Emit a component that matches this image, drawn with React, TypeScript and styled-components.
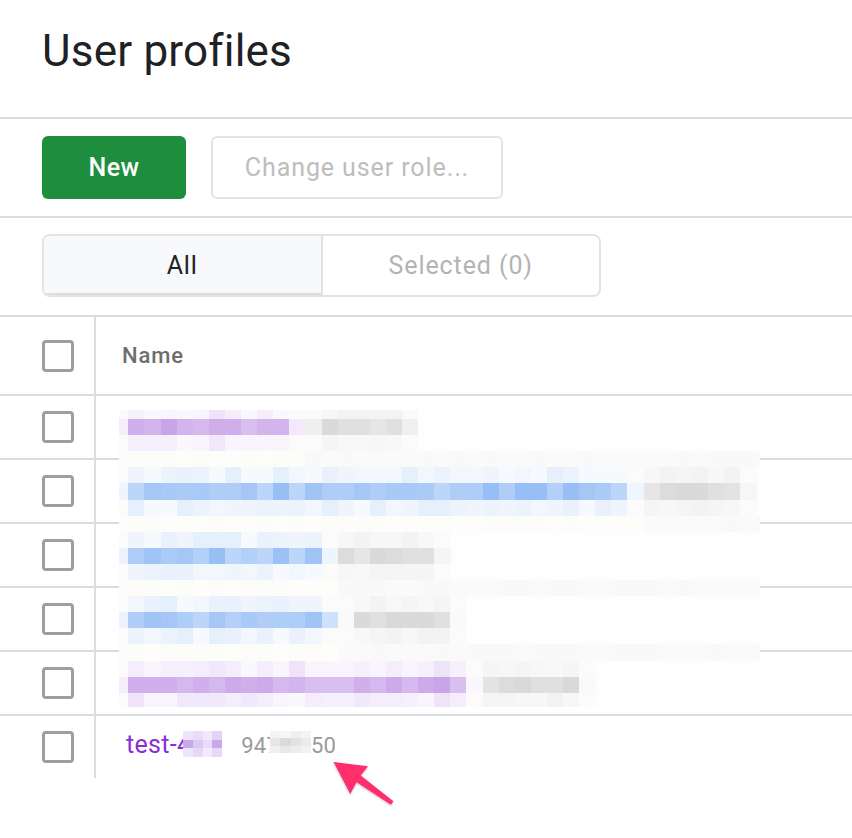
import React from 'react';
import styled, { createGlobalStyle } from 'styled-components';

const GlobalStyle = createGlobalStyle`
  html, body { margin: 0; padding: 0; background: #ffffff; }
  body { font-family: Roboto, "Noto Sans", Arial, sans-serif; }
  * { box-sizing: border-box; }
`;

const Page = styled.div`
  position: relative;
  width: 852px;
  min-height: 838px;
  background: #fff;
`;

const Header = styled.header`
  height: 117px;
  padding: 25px 0 0 42px;
`;

const Title = styled.h1`
  margin: 0;
  font-family: Roboto, sans-serif;
  font-size: 44px;
  line-height: 52px;
  font-weight: 400;
  letter-spacing: 0.2px;
  color: #202124;
`;

const Rule = styled.div`
  height: 2px;
  background: #dadce0;
`;

const Toolbar = styled.div`
  height: 97px;
  display: flex;
  align-items: center;
  gap: 25px;
  padding: 0 42px;
`;

const PrimaryButton = styled.button`
  width: 144px;
  height: 63px;
  padding: 0;
  border: 0;
  border-radius: 6px;
  background: #1e8e3e;
  color: #ffffff;
  font-family: Roboto, sans-serif;
  font-size: 25px;
  font-weight: 500;
  letter-spacing: 0.4px;
`;

const OutlineButton = styled.button`
  width: 292px;
  height: 63px;
  padding: 0;
  border: 2px solid #e3e3e3;
  border-radius: 6px;
  background: #ffffff;
  color: #bdbdbd;
  font-family: Roboto, sans-serif;
  font-size: 25px;
  font-weight: 400;
  letter-spacing: 0.9px;
`;

const TabBar = styled.div`
  height: 97px;
  padding: 16px 42px 0;
`;

const TabGroup = styled.div`
  display: flex;
  width: 559px;
  height: 63px;
  border: 2px solid #e3e3e3;
  border-radius: 8px;
  overflow: hidden;
`;

const Tab = styled.div<{ $active?: boolean; $divider?: boolean }>`
  flex: 1;
  display: flex;
  align-items: center;
  justify-content: center;
  font-size: 25px;
  letter-spacing: 0.9px;
  color: ${(p) => (p.$active ? '#202124' : '#b3b3b3')};
  background: ${(p) => (p.$active ? '#f8f9fa' : '#ffffff')};
  border-right: ${(p) => (p.$divider ? '2px solid #e3e3e3' : '0')};
  box-shadow: ${(p) => (p.$active ? 'inset 0 -2px 0 #dcdde0' : 'none')};
`;

const Table = styled.div`
  position: relative;
  border-top: 2px solid #dadce0;
`;

const Row = styled.div<{ $h: number; $last?: boolean }>`
  display: flex;
  height: ${(p) => p.$h + (p.$last ? 0 : 2)}px;
  border-bottom: ${(p) => (p.$last ? '0' : '2px solid #dadce0')};
`;

const CheckCell = styled.div`
  width: 96px;
  flex: none;
  display: flex;
  align-items: center;
  padding-left: 42px;
  border-right: 2px solid #dadce0;
`;

const Checkbox = styled.div`
  width: 32px;
  height: 32px;
  border: 3px solid #9e9e9e;
  border-radius: 4px;
`;

const MainCell = styled.div<{ $pb?: number }>`
  flex: 1;
  display: flex;
  align-items: center;
  padding-left: 26px;
  padding-bottom: ${(p) => p.$pb ?? 0}px;
`;

const HeaderLabel = styled.span`
  font-size: 22px;
  font-weight: 500;
  letter-spacing: 0.9px;
  color: #6e6e6e;
`;

const Line = styled.span`
  white-space: nowrap;
  padding-left: 4px;
`;

const NameLink = styled.span`
  font-size: 25px;
  letter-spacing: 0.3px;
  color: #8a2fd6;
`;

const Phone = styled.span`
  margin-left: 19px;
  font-size: 22px;
  letter-spacing: 0.2px;
  color: #9a9a9a;
`;

const Cover = styled.svg<{ $ml: number; $va: number }>`
  display: inline-block;
  margin-left: ${(p) => p.$ml}px;
  vertical-align: ${(p) => p.$va}px;
`;

const Overlay = styled.svg`
  position: absolute;
  left: 119px;
  top: 93px;
`;

const Arrow = styled.svg`
  position: absolute;
  left: 326px;
  top: 754px;
  overflow: visible;
`;

/* ---------- pixelation mosaic (redacted drawing) ---------- */
const X0 = 112.2;
const Y0 = 402.9;
const S = 16.1;

const rnd = (a: number, b: number) => {
  const x = Math.sin(a * 127.1 + b * 311.7) * 43758.5453;
  return x - Math.floor(x);
};
const pick = (arr: string[], a: number, b: number) => arr[Math.floor(rnd(a, b) * arr.length)];

const STRONG: Record<string, string[]> = {
  purple: ['#d0b0ec', '#d6baef', '#c8a4e8', '#d3b5ed', '#cdabea', '#d9bff0', '#cfaeeb', '#d5b8ee'],
  blue: ['#9bc1f6', '#a8caf7', '#aecdf7', '#b2d0f8', '#97bef5', '#bcd6f9', '#abcbf7', '#a1c4f6', '#a6c7f6', '#afcdf7'],
  gray: ['#d9d9d9', '#dcdcdc', '#e0e0e0', '#e6e6e6', '#dadada', '#e3e3e3'],
};
const FAINT: Record<string, string[]> = {
  purple: ['#fbf7fe', '#f5edfb', '#f2e8fb', '#f9f4fd', '#f6effc', '#efe3f9'],
  blue: ['#edf3fd', '#f2f6fd', '#eaf1fc', '#f6f9fe', '#f0f5fd', '#e6effc'],
  gray: ['#f5f5f5', '#f7f7f7', '#f3f3f3', '#f8f8f8'],
};

type Seg = { from: number; to: number; kind: 'purple' | 'blue' | 'gray' | 'solid'; color?: string };
const LINES: { tone: 'purple' | 'blue'; segs: Seg[] }[] = [
  {
    tone: 'purple',
    segs: [
      { from: 0, to: 0, kind: 'solid', color: '#f6ecfb' },
      { from: 1, to: 10, kind: 'purple' },
      { from: 11, to: 11, kind: 'solid', color: '#f5e8fa' },
      { from: 12, to: 12, kind: 'solid', color: '#eef0ee' },
      { from: 13, to: 17, kind: 'gray' },
      { from: 18, to: 18, kind: 'solid', color: '#f0f0f0' },
    ],
  },
  {
    tone: 'blue',
    segs: [
      { from: 0, to: 0, kind: 'solid', color: '#eef5fe' },
      { from: 1, to: 31, kind: 'blue' },
      { from: 32, to: 32, kind: 'solid', color: '#f0f6fe' },
      { from: 33, to: 38, kind: 'gray' },
      { from: 39, to: 39, kind: 'solid', color: '#f6f6f6' },
    ],
  },
  {
    tone: 'blue',
    segs: [
      { from: 0, to: 0, kind: 'solid', color: '#eaf2fd' },
      { from: 1, to: 12, kind: 'blue' },
      { from: 13, to: 13, kind: 'solid', color: '#eef5fe' },
      { from: 14, to: 19, kind: 'gray' },
      { from: 20, to: 20, kind: 'solid', color: '#f5f5f5' },
    ],
  },
  {
    tone: 'blue',
    segs: [
      { from: 0, to: 0, kind: 'solid', color: '#eaf2fd' },
      { from: 1, to: 12, kind: 'blue' },
      { from: 13, to: 13, kind: 'solid', color: '#cfe2fb' },
      { from: 14, to: 14, kind: 'solid', color: '#fafafa' },
      { from: 15, to: 20, kind: 'gray' },
      { from: 21, to: 21, kind: 'solid', color: '#fafafa' },
    ],
  },
  {
    tone: 'purple',
    segs: [
      { from: 0, to: 0, kind: 'solid', color: '#f6ecfb' },
      { from: 1, to: 21, kind: 'purple' },
      { from: 22, to: 22, kind: 'solid', color: '#faf6fd' },
      { from: 23, to: 28, kind: 'gray' },
      { from: 29, to: 29, kind: 'solid', color: '#fafafa' },
    ],
  },
];

type Cell = { x: number; y: number; c: string };

const buildCells = (): Cell[] => {
  const cells: Cell[] = [];
  LINES.forEach((line, i) => {
    const kTop = 4 * i;
    const rows = [kTop, kTop + 1, kTop + 2];
    rows.forEach((k, ri) => {
      line.segs.forEach((seg) => {
        for (let c = seg.from; c <= seg.to; c++) {
          let color: string;
          if (ri === 1) {
            color = seg.kind === 'solid' ? (seg.color as string) : pick(STRONG[seg.kind], k, c);
          } else if (seg.kind === 'solid') {
            color = '#fbfbfb';
          } else {
            color = pick(FAINT[seg.kind], k, c);
          }
          cells.push({ x: X0 + c * S, y: Y0 + k * S, c: color });
        }
      });
    });
    if (i < LINES.length - 1) {
      const k = kTop + 3;
      const toneEnd = line.segs.find((s) => s.kind === line.tone)!.to;
      for (let c = 0; c <= 40; c++) {
        const color = c <= toneEnd + 1 ? (rnd(k, c) > 0.5 ? '#fcfcf8' : '#fdfdfa') : rnd(k, c) > 0.5 ? '#f9f9f9' : '#fafafa';
        cells.push({ x: X0 + c * S, y: Y0 + k * S, c: color });
      }
    }
  });
  return cells;
};

const CELLS = buildCells();

const Mosaic = () => (
  <Overlay width={641} height={297} viewBox="119 410 641 297" shapeRendering="crispEdges">
    <rect x={119} y={410} width={641} height={297} fill="#fefefe" />
    {CELLS.map((cell, idx) => (
      <rect key={idx} x={cell.x} y={cell.y} width={S + 0.3} height={S + 0.3} fill={cell.c} />
    ))}
  </Overlay>
);

const SmallMosaic = ({ grid, w, h, ml, va }: { grid: string[][]; w: number; h: number; ml: number; va: number }) => {
  const rows = grid.length;
  const cols = grid[0].length;
  const cw = w / cols;
  const ch = h / rows;
  return (
    <Cover width={w} height={h} $ml={ml} $va={va} shapeRendering="crispEdges">
      {grid.map((r, ri) =>
        r.map((c, ci) => <rect key={`${ri}-${ci}`} x={ci * cw} y={ri * ch} width={cw + 0.5} height={ch + 0.5} fill={c} />)
      )}
    </Cover>
  );
};

const NAME_GRID = [
  ['#eee3fa', '#e9dcf7', '#f1e8fb', '#e4d3f6'],
  ['#c9a8ea', '#dcc9f3', '#e9dcf8', '#c9a9ec'],
  ['#efe5fa', '#e6d8f7', '#f3ebfc', '#e8daf7'],
];
const NUM_GRID = [
  ['#f3f3f3', '#f6f6f6', '#efefef', '#f4f4f4'],
  ['#e6e6e6', '#dadada', '#e2e2e2', '#ebebeb'],
  ['#f0f0f0', '#e8e8e8', '#ededed', '#f2f2f2'],
];

const BODY_ROWS = 5;

export default function App() {
  return (
    <Page>
      <GlobalStyle />
      <Header>
        <Title>User profiles</Title>
      </Header>
      <Rule />
      <Toolbar>
        <PrimaryButton>New</PrimaryButton>
        <OutlineButton>Change user role...</OutlineButton>
      </Toolbar>
      <Rule />
      <TabBar>
        <TabGroup>
          <Tab $active $divider>All</Tab>
          <Tab>Selected (0)</Tab>
        </TabGroup>
      </TabBar>
      <Table>
        <Row $h={77}>
          <CheckCell>
            <Checkbox />
          </CheckCell>
          <MainCell>
            <HeaderLabel>Name</HeaderLabel>
          </MainCell>
        </Row>
        {Array.from({ length: BODY_ROWS }).map((_, i) => (
          <Row key={i} $h={62}>
            <CheckCell>
              <Checkbox />
            </CheckCell>
            <MainCell />
          </Row>
        ))}
        <Row $h={62} $last>
          <CheckCell>
            <Checkbox />
          </CheckCell>
          <MainCell $pb={5}>
            <Line>
              <NameLink>
                test-4
                <SmallMosaic grid={NAME_GRID} w={39} h={26} ml={-8} va={-4} />
              </NameLink>
              <Phone>
                947
                <SmallMosaic grid={NUM_GRID} w={41} h={22} ml={-9} va={0} />
                50
              </Phone>
            </Line>
          </MainCell>
        </Row>
        <Mosaic />
      </Table>
      <Arrow width={72} height={56} viewBox="326 754 72 56">
        <defs>
          <filter id="arrowShadow" x="-20%" y="-20%" width="140%" height="140%">
            <feDropShadow dx="0" dy="1" stdDeviation="1" floodColor="#000" floodOpacity="0.25" />
          </filter>
        </defs>
        <polygon
          points="333.5,762 368,766.3 360.8,775.6 393.4,801.2 390.8,804.8 356.6,782.2 350.2,794"
          fill="#ff2d6d"
          filter="url(#arrowShadow)"
        />
      </Arrow>
    </Page>
  );
}
